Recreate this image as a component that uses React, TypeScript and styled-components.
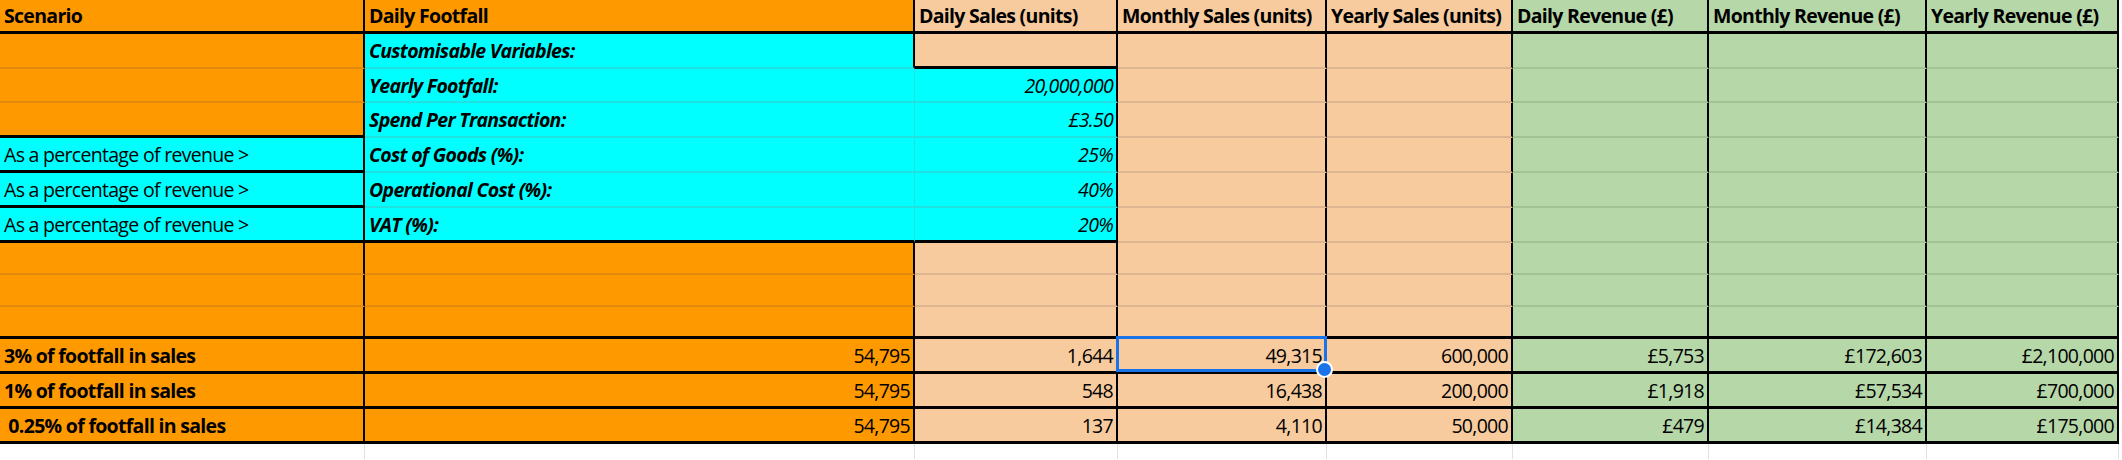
import React from "react";
import styled, { createGlobalStyle } from "styled-components";

const Global = createGlobalStyle`
  html, body { margin: 0; padding: 0; background: #fff; }
  body { font-family: "Open Sans", "Liberation Sans", sans-serif; }
`;

const O = "#FF9900", C = "#00FFFF", P = "#F7CB9E", G = "#B6D7A8";
const shade: Record<string, string> = { [O]: "#E08A10", [C]: "#22E0E0", [P]: "#DDB592", [G]: "#A3C296" };

const cols = [365, 550, 203, 209, 186, 196, 218, 192];

const Sheet = styled.div`
  display: grid;
  grid-template-columns: ${cols.map((c) => c + "px").join(" ")};
  width: 2119px;
`;

const Cell = styled.div<{ $bg: string; $h: number; $align?: string; $bold?: boolean; $it?: boolean; $bb: string; $br: string }>`
  position: relative;
  box-sizing: border-box;
  height: ${(p) => p.$h}px;
  background: ${(p) => p.$bg};
  border-bottom: ${(p) => p.$bb};
  border-right: ${(p) => p.$br};
  display: flex;
  align-items: center;
  justify-content: ${(p) => (p.$align === "r" ? "flex-end" : "flex-start")};
  padding: 0 3px 0 4px;
  font-size: 19.5px;
  letter-spacing: -0.7px;
  font-weight: ${(p) => (p.$bold ? 700 : 500)};
  font-style: ${(p) => (p.$it ? "italic" : "normal")};
  color: #000;
  white-space: nowrap;
  overflow: visible;
`;

const Selection = styled.div`
  position: absolute;
  inset: -3px -2px -1px -2px;
  border: 3px solid #1A73E8;
  pointer-events: none;
`;
const Handle = styled.div`
  position: absolute;
  right: -9px;
  bottom: -9px;
  width: 13px;
  height: 13px;
  border-radius: 50%;
  background: #1A73E8;
  border: 2px solid #fff;
  z-index: 2;
`;

const Tail = styled.div`
  height: 15px;
  border-right: 1px solid #e2e2e2;
  box-sizing: border-box;
`;

type C = { t?: string; bg: string; a?: string; b?: boolean; i?: boolean; bb?: string; br?: string; sel?: boolean };
type Row = { h: number; cells: C[] };

const thick = "3px solid #000";
const vline = "2px solid #000";

const pct = "As a percentage of revenue >";
const rows: Row[] = [
  {
    h: 34,
    cells: ["Scenario", "Daily Footfall", "Daily Sales (units)", "Monthly Sales (units)", "Yearly Sales (units)", "Daily Revenue (£)", "Monthly Revenue (£)", "Yearly Revenue (£)"].map(
      (t, k) => ({ t, b: true, bg: [O, O, P, P, P, G, G, G][k], bb: thick })
    ),
  },
  {
    h: 35,
    cells: [
      { bg: O },
      { t: "Customisable Variables:", b: true, i: true, bg: C },
      { bg: P, bb: thick },
      { bg: P }, { bg: P }, { bg: G }, { bg: G }, { bg: G },
    ],
  },
  ...[
    ["", "Yearly Footfall:", "20,000,000"],
    ["", "Spend Per Transaction:", "£3.50"],
    [pct, "Cost of Goods (%):", "25%"],
    [pct, "Operational Cost (%):", "40%"],
    [pct, "VAT (%):", "20%"],
  ].map(([a, l, v], k) => ({
    h: k === 0 ? 34 : 35,
    cells: [
      { t: a, bg: a ? C : O, bb: a || k === 1 ? thick : undefined },
      { t: l, b: true, i: true, bg: C, br: `1px solid ${shade[C]}`, bb: k === 4 ? thick : undefined },
      { t: v, a: "r", i: true, bg: C, bb: k === 4 ? thick : undefined },
      { bg: P }, { bg: P }, { bg: G }, { bg: G }, { bg: G },
    ] as C[],
  })),
  ...[0, 1, 2].map((k) => ({
    h: 32,
    cells: [O, O, P, P, P, G, G, G].map((bg) => ({ bg, bb: k === 2 ? thick : undefined })),
  })),
  ...[
    ["3% of footfall in sales", "1,644", "49,315", "600,000", "£5,753", "£172,603", "£2,100,000"],
    ["1% of footfall in sales", "548", "16,438", "200,000", "£1,918", "£57,534", "£700,000"],
    ["\u00a00.25% of footfall in sales", "137", "4,110", "50,000", "£479", "£14,384", "£175,000"],
  ].map((r, k) => ({
    h: 35,
    cells: [
      { t: r[0], b: true, bg: O, bb: thick },
      { t: "54,795", a: "r", bg: O, bb: thick },
      ...r.slice(1).map((t, j) => ({ t, a: "r", bg: [P, P, P, G, G, G][j], bb: thick, sel: k === 0 && j === 1 })),
    ] as C[],
  })),
];

export default function App() {
  return (
    <>
      <Global />
      <Sheet>
        {rows.map((r, ri) =>
          r.cells.map((c, ci) => (
            <Cell
              key={ri + "-" + ci}
              $h={r.h}
              $bg={c.bg}
              $align={c.a}
              $bold={c.b}
              $it={c.i}
              $bb={c.bb ?? `2px solid ${shade[c.bg]}`}
              $br={c.br ?? vline}
            >
              {c.t}
              {c.sel && (
                <Selection>
                  <Handle />
                </Selection>
              )}
            </Cell>
          ))
        )}
        {cols.map((_, k) => (
          <Tail key={k} />
        ))}
      </Sheet>
    </>
  );
}
